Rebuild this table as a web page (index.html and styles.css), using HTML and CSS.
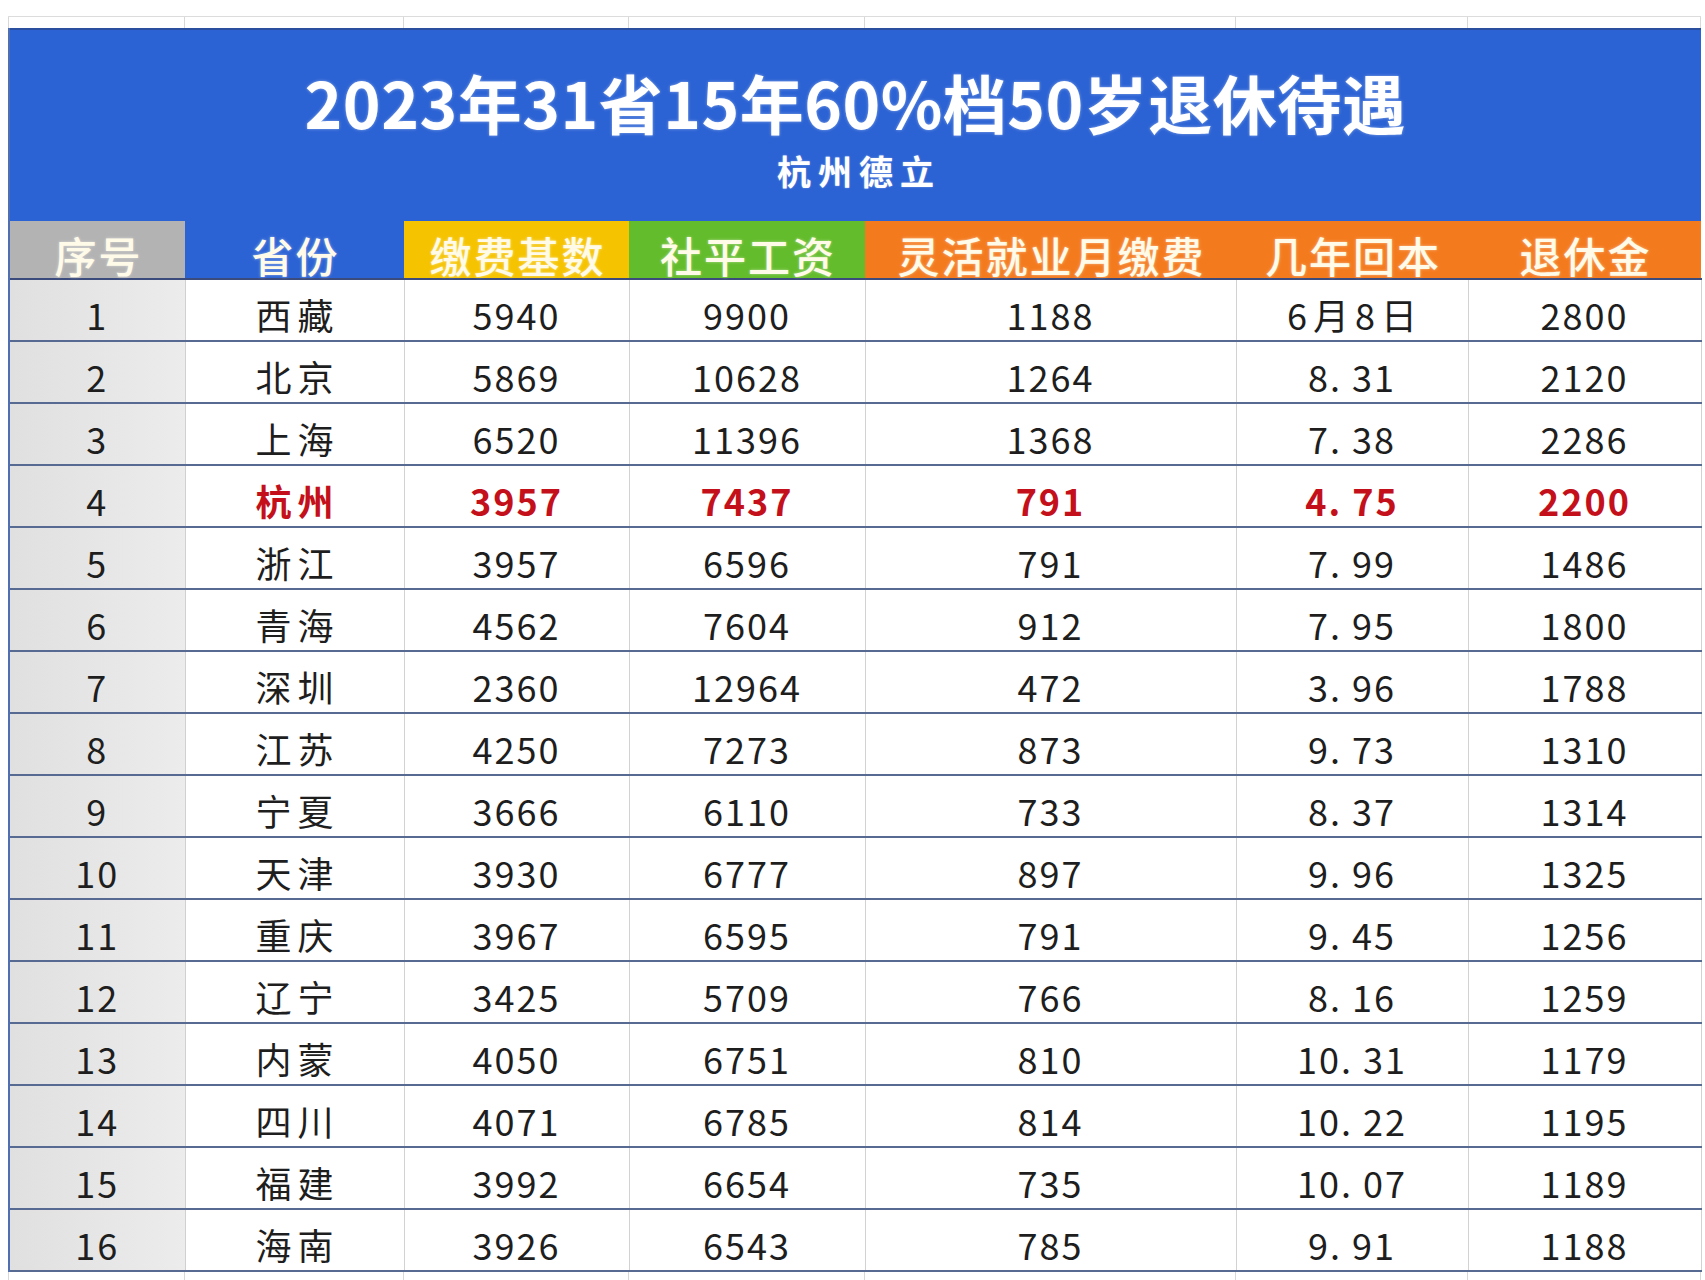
FILE: index.html
```html
<!DOCTYPE html>
<html lang="zh-CN">
<head>
<meta charset="utf-8">
<title>2023年31省15年60%档50岁退休待遇</title>
<link rel="stylesheet" href="styles.css">
</head>
<body>
<div class="page">
  <div class="gridstrip top">
    <span></span><span></span><span></span><span></span><span></span><span></span><span></span>
  </div>
  <div class="sheet">
    <div class="banner">
      <h1 class="title">2023年31省15年60%档50岁退休待遇</h1>
      <div class="subtitle">杭州德立</div>
    </div>
    <table class="data">
      <colgroup>
        <col class="c1"><col class="c2"><col class="c3"><col class="c4"><col class="c5"><col class="c6"><col class="c7">
      </colgroup>
      <thead>
        <tr>
          <th class="h-grey">序号</th>
          <th class="h-blue">省份</th>
          <th class="h-yellow">缴费基数</th>
          <th class="h-green">社平工资</th>
          <th class="h-orange">灵活就业月缴费</th>
          <th class="h-orange">几年回本</th>
          <th class="h-orange">退休金</th>
        </tr>
      </thead>
      <tbody>
        <tr><td class="idx">1</td><td class="prov">西藏</td><td>5940</td><td>9900</td><td>1188</td><td class="prov">6月8日</td><td>2800</td></tr>
        <tr><td class="idx">2</td><td class="prov">北京</td><td>5869</td><td>10628</td><td>1264</td><td>8. 31</td><td>2120</td></tr>
        <tr><td class="idx">3</td><td class="prov">上海</td><td>6520</td><td>11396</td><td>1368</td><td>7. 38</td><td>2286</td></tr>
        <tr class="hl"><td class="idx">4</td><td class="prov">杭州</td><td>3957</td><td>7437</td><td>791</td><td>4. 75</td><td>2200</td></tr>
        <tr><td class="idx">5</td><td class="prov">浙江</td><td>3957</td><td>6596</td><td>791</td><td>7. 99</td><td>1486</td></tr>
        <tr><td class="idx">6</td><td class="prov">青海</td><td>4562</td><td>7604</td><td>912</td><td>7. 95</td><td>1800</td></tr>
        <tr><td class="idx">7</td><td class="prov">深圳</td><td>2360</td><td>12964</td><td>472</td><td>3. 96</td><td>1788</td></tr>
        <tr><td class="idx">8</td><td class="prov">江苏</td><td>4250</td><td>7273</td><td>873</td><td>9. 73</td><td>1310</td></tr>
        <tr><td class="idx">9</td><td class="prov">宁夏</td><td>3666</td><td>6110</td><td>733</td><td>8. 37</td><td>1314</td></tr>
        <tr><td class="idx">10</td><td class="prov">天津</td><td>3930</td><td>6777</td><td>897</td><td>9. 96</td><td>1325</td></tr>
        <tr><td class="idx">11</td><td class="prov">重庆</td><td>3967</td><td>6595</td><td>791</td><td>9. 45</td><td>1256</td></tr>
        <tr><td class="idx">12</td><td class="prov">辽宁</td><td>3425</td><td>5709</td><td>766</td><td>8. 16</td><td>1259</td></tr>
        <tr><td class="idx">13</td><td class="prov">内蒙</td><td>4050</td><td>6751</td><td>810</td><td>10. 31</td><td>1179</td></tr>
        <tr><td class="idx">14</td><td class="prov">四川</td><td>4071</td><td>6785</td><td>814</td><td>10. 22</td><td>1195</td></tr>
        <tr><td class="idx">15</td><td class="prov">福建</td><td>3992</td><td>6654</td><td>735</td><td>10. 07</td><td>1189</td></tr>
        <tr><td class="idx">16</td><td class="prov">海南</td><td>3926</td><td>6543</td><td>785</td><td>9. 91</td><td>1188</td></tr>
      </tbody>
    </table>
  </div>
  <div class="gridstrip bottom">
    <span></span><span></span><span></span><span></span><span></span><span></span><span></span>
  </div>
</div>
</body>
</html>
```

FILE: styles.css
```css
html, body {
  margin: 0;
  padding: 0;
  background: #ffffff;
}

body {
  font-family: "Noto Sans CJK SC", "Noto Sans", sans-serif;
  color: #222222;
}

.page {
  width: 1705px;
  height: 1280px;
  overflow: hidden;
}

.gridstrip {
  display: grid;
  grid-template-columns: 177px 219px 225px 236px 371px 232px 233px;
  margin-left: 8px;
  width: 1693px;
}

.gridstrip span {
  border-right: 1px solid #d8d8d8;
}

.gridstrip span:first-child {
  border-left: 1px solid #d8d8d8;
}

.gridstrip.top {
  margin-top: 16px;
  height: 11px;
  border-top: 1px solid #dcdcdc;
}

.gridstrip.bottom {
  height: 20px;
}

.sheet {
  margin-left: 8px;
  width: 1693px;
  border-left: 2px solid #4f6fb2;
  box-sizing: border-box;
}

.banner {
  background: #2c63d4;
  height: 193px;
  border-top: 2px solid #2a4f9e;
  box-sizing: border-box;
  display: flex;
  flex-direction: column;
  align-items: center;
  color: #ffffff;
}

.title {
  margin: 40px 0 0 0;
  font-size: 64px;
  line-height: 62px;
  font-weight: 700;
  letter-spacing: 0.5px;
  text-shadow: 0 0 3px rgba(255, 255, 255, 0.45);
}

.subtitle {
  margin-top: 22px;
  font-size: 34px;
  line-height: 34px;
  font-weight: 700;
  letter-spacing: 7px;
  padding-left: 7px;
  text-shadow: 0 0 2px rgba(255, 255, 255, 0.4);
}

.data {
  border-collapse: collapse;
  table-layout: fixed;
  width: 1691px;
}

.c1 { width: 175px; }
.c2 { width: 219px; }
.c3 { width: 225px; }
.c4 { width: 236px; }
.c5 { width: 371px; }
.c6 { width: 232px; }
.c7 { width: 233px; }

.data th {
  height: 56px;
  padding: 0 0 1px 2px;
  font-size: 42px;
  line-height: 44px;
  font-weight: 500;
  letter-spacing: 2px;
  vertical-align: bottom;
  text-align: center;
  color: #fffbe8;
  border-bottom: 2px solid #3b4c7c;
  text-shadow: 0 0 3px rgba(255, 255, 255, 0.5);
}

.h-grey { background: #b3b3b3; color: #f6f6f6; }
.h-blue { background: #2c63d4; color: #ffffff; }
.h-yellow { background: #f6c300; color: #fff6c8; }
.h-green { background: #63bc2b; color: #f2ffe6; }
.h-orange { background: #f47a1e; color: #fff1dc; }

.data tbody tr {
  height: 62px;
}

.data td {
  height: 62px;
  padding: 0 0 6px 0;
  box-sizing: border-box;
  font-size: 36px;
  line-height: 40px;
  letter-spacing: 2px;
  text-align: center;
  vertical-align: bottom;
  background: #ffffff;
  color: #1e1e1e;
  border-bottom: 2px solid #566a92;
  border-right: 1px solid #d2d2d2;
}

.data td.idx {
  background: linear-gradient(90deg, #e0e0e0, #ececec);
  border-right: 1px solid #d0d0d0;
}

.data td.prov {
  letter-spacing: 6px;
  padding-left: 6px;
}

.data tr.hl td {
  color: #c4101a;
  font-weight: 700;
}

.data tr.hl td.idx {
  color: #1e1e1e;
  font-weight: 400;
}
```
